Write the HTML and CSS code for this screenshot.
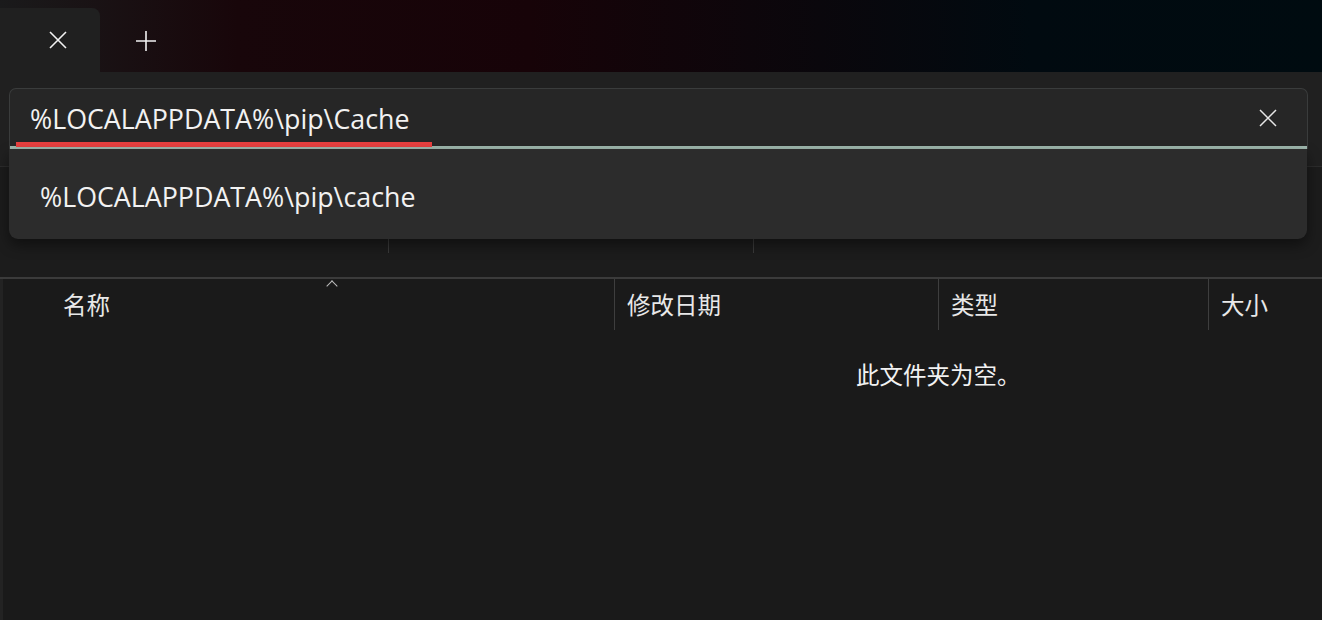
FILE: index.html
```html
<!DOCTYPE HTML>
<html>
<head>
	<meta http-equiv="Content-Type" content="text/html; charset=utf-8">
	<title>pip Cache</title>
	<link rel="stylesheet" href="styles.css">
</head>
<body>
	<div class="titlebar">
		<div class="tab">
			<svg class="icon" width="20" height="20" viewBox="0 0 20 20"><path d="M2 2 L18 18 M18 2 L2 18" stroke="#f2f2f2" stroke-width="1.6" fill="none"/></svg>
		</div>
		<div class="newtab">
			<svg class="icon" width="22" height="22" viewBox="0 0 22 22"><path d="M11 1 V21 M1 11 H21" stroke="#f2f2f2" stroke-width="1.6" fill="none"/></svg>
		</div>
	</div>

	<div class="addrbar">
		<div class="addr">
			<span class="addr-text">%LOCALAPPDATA%\pip\Cache</span>
			<svg class="clear" width="18" height="18" viewBox="0 0 18 18"><path d="M1 1 L17 17 M17 1 L1 17" stroke="#e6e6e6" stroke-width="1.5" fill="none"/></svg>
			<div class="spell"></div>
		</div>
		<div class="suggest">
			<div class="suggest-item">%LOCALAPPDATA%\pip\cache</div>
		</div>
	</div>

	<div class="toolbar">
		<span class="sep sep1"></span>
		<span class="sep sep2"></span>
	</div>

	<div class="content">
		<div class="cols">
			<div class="col col-name">名称<span class="sort"></span></div>
			<div class="col col-date">修改日期</div>
			<div class="col col-type">类型</div>
			<div class="col col-size">大小</div>
		</div>
		<div class="empty">此文件夹为空。</div>
	</div>
</body>
</html>
```

FILE: styles.css
```css
body{
	margin: 0;
	width: 1322px;
	height: 620px;
	overflow: hidden;
	background-color: #1a1a1a;
	color: #f0f0f0;
	font-family: "Open Sans", "Noto Sans CJK SC", sans-serif;
}
.titlebar{
	height: 72px;
	display: flex;
	align-items: flex-end;
	background: linear-gradient(90deg, #1a1a1b 0%, #18060a 18%, #170308 40%, #0a070c 62%, #010a10 78%, #000b10 100%);
}
.tab{
	width: 100px;
	height: 64px;
	background-color: #202020;
	border-top-right-radius: 8px;
	padding: 22px 0 0 48px;
	box-sizing: border-box;
}
.newtab{
	height: 64px;
	padding: 22px 0 0 35px;
	box-sizing: border-box;
}
.addrbar{
	position: relative;
	height: 94px;
	background-color: #202020;
	padding: 16px 14px 0 9px;
	box-sizing: border-box;
}
.addr{
	position: relative;
	height: 61px;
	background-color: #262626;
	border: 1px solid #3a3c3c;
	border-bottom: 0;
	border-radius: 7px 7px 0 0;
	box-shadow: inset 0 -3px 0 #9fb8ae;
	display: flex;
	align-items: center;
	padding: 0 0 1px 20px;
	box-sizing: border-box;
}
.addr-text{
	flex: 1;
	font-size: 26.8px;
	color: #f2f2f2;
}
.clear{
	margin-right: 30px;
	margin-bottom: 2px;
}
.spell{
	position: absolute;
	left: 6px;
	bottom: 2px;
	width: 416px;
	height: 5px;
	background-color: #e8403f;
}
.suggest{
	position: absolute;
	left: 9px;
	top: 77px;
	width: 1298px;
	height: 90px;
	background-color: #2c2c2c;
	border-radius: 0 0 9px 9px;
	box-shadow: 0 6px 14px rgba(0,0,0,0.45);
	z-index: 2;
}
.suggest-item{
	padding: 29px 0 0 31px;
	font-size: 26.8px;
	color: #f2f2f2;
}
.toolbar{
	position: relative;
	height: 110px;
	background-color: #1c1c1c;
	border-top: 1px solid #2c2c2c;
	border-bottom: 2px solid #3b3b3b;
}
.sep{
	position: absolute;
	top: 72px;
	width: 1px;
	height: 14px;
	background-color: #3a3a3a;
}
.sep1{ left: 388px; }
.sep2{ left: 753px; }
.content{
	border-left: 3px solid #232323;
	height: 343px;
}
.cols{
	display: flex;
	height: 51px;
	font-size: 23.5px;
	color: #e8e8e8;
}
.col{
	position: relative;
	display: flex;
	align-items: center;
	padding-left: 12px;
	padding-bottom: 2px;
	border-left: 1px solid #3e3e3e;
	box-sizing: border-box;
}
.col-name{
	width: 611px;
	padding-left: 60px;
	border-left: 0;
}
.col-date{ width: 324px; }
.col-type{ width: 270px; }
.col-size{ flex: 1; }
.sort{
	position: absolute;
	left: 325px;
	top: 3px;
	width: 7px;
	height: 7px;
	border-left: 1px solid #bdbdbd;
	border-top: 1px solid #bdbdbd;
	transform: rotate(45deg);
}
.empty{
	padding: 27px 0 0 853px;
	font-size: 23.5px;
	color: #f2f2f2;
}
```
